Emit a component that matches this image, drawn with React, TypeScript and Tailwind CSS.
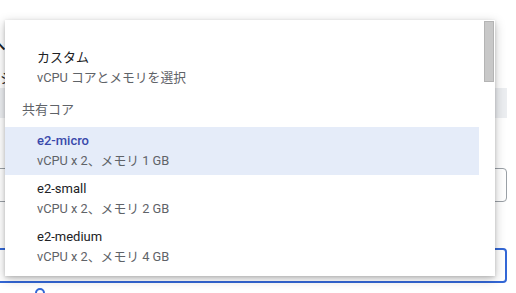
import React from 'react';

const font = { fontFamily: 'Roboto, "Noto Sans CJK JP", sans-serif' };

interface OptionProps {
  title: string;
  detail: string;
  active?: boolean;
}

function Option({ title, detail, active }: OptionProps): React.ReactElement {
  return (
    <div className={`h-12 flex flex-col justify-center pl-8 ${active ? 'bg-[#e5ecf9]' : ''}`}>
      <div className={`text-[13px] leading-[18px] ${active ? 'text-[#3949ab] font-medium' : 'text-[#202124]'}`}>
        {title}
      </div>
      <div className="text-[12.8px] leading-[18px] text-[#5f6368] mt-[2px]">{detail}</div>
    </div>
  );
}

export default function App(): React.ReactElement {
  return (
    <div className="relative w-[516px] h-[293px] overflow-hidden bg-white" style={font}>
      {/* form behind the menu */}
      <div className="ml-[-14px] w-[521px] pt-[34px] flex flex-col">
        <div className="text-[20px] leading-[20px] text-[#202124]">へ構成</div>
        <div className="mt-[16px] text-[14px] leading-[16px] text-[#202124]">マシン</div>
        <div className="mt-[2px] h-[30px] bg-[#eceef1]" />
        <div className="mt-[4px] text-[13px] leading-[16px] text-[#5f6368]">語</div>
        <div className="mt-[30px] h-[34px] border border-[#9aa0a6] rounded-[4px]" />
        <div className="text-[13px] leading-[16px] text-[#5f6368]">可</div>
        <div className="mt-[30px] h-[35px] border-2 border-[#3367d6] rounded-[4px]" />
        <div className="mt-[5px] ml-[49px] w-[10px] h-[10px] rounded-full border-2 border-[#3367d6]" />
      </div>

      {/* dropdown panel */}
      <div className="absolute left-[5px] top-[20px] w-[490px] h-[256px] bg-white flex shadow-[0_3px_10px_rgba(0,0,0,0.25),0_1px_3px_rgba(0,0,0,0.15)]">
        <div className="w-[474px] pt-6">
          <Option title="カスタム" detail="vCPU コアとメモリを選択" />
          <div className="h-[35px] flex items-center pl-[17px] text-[13px] text-[#5f6368]">共有コア</div>
          <Option title="e2-micro" detail="vCPU x 2、メモリ 1 GB" active />
          <Option title="e2-small" detail="vCPU x 2、メモリ 2 GB" />
          <Option title="e2-medium" detail="vCPU x 2、メモリ 4 GB" />
        </div>
        <div className="ml-[5px] w-[10px] pt-[1px]">
          <div className="h-[61px] bg-[#c8c8c8] border border-[#b4b4b4]" />
        </div>
      </div>
    </div>
  );
}
